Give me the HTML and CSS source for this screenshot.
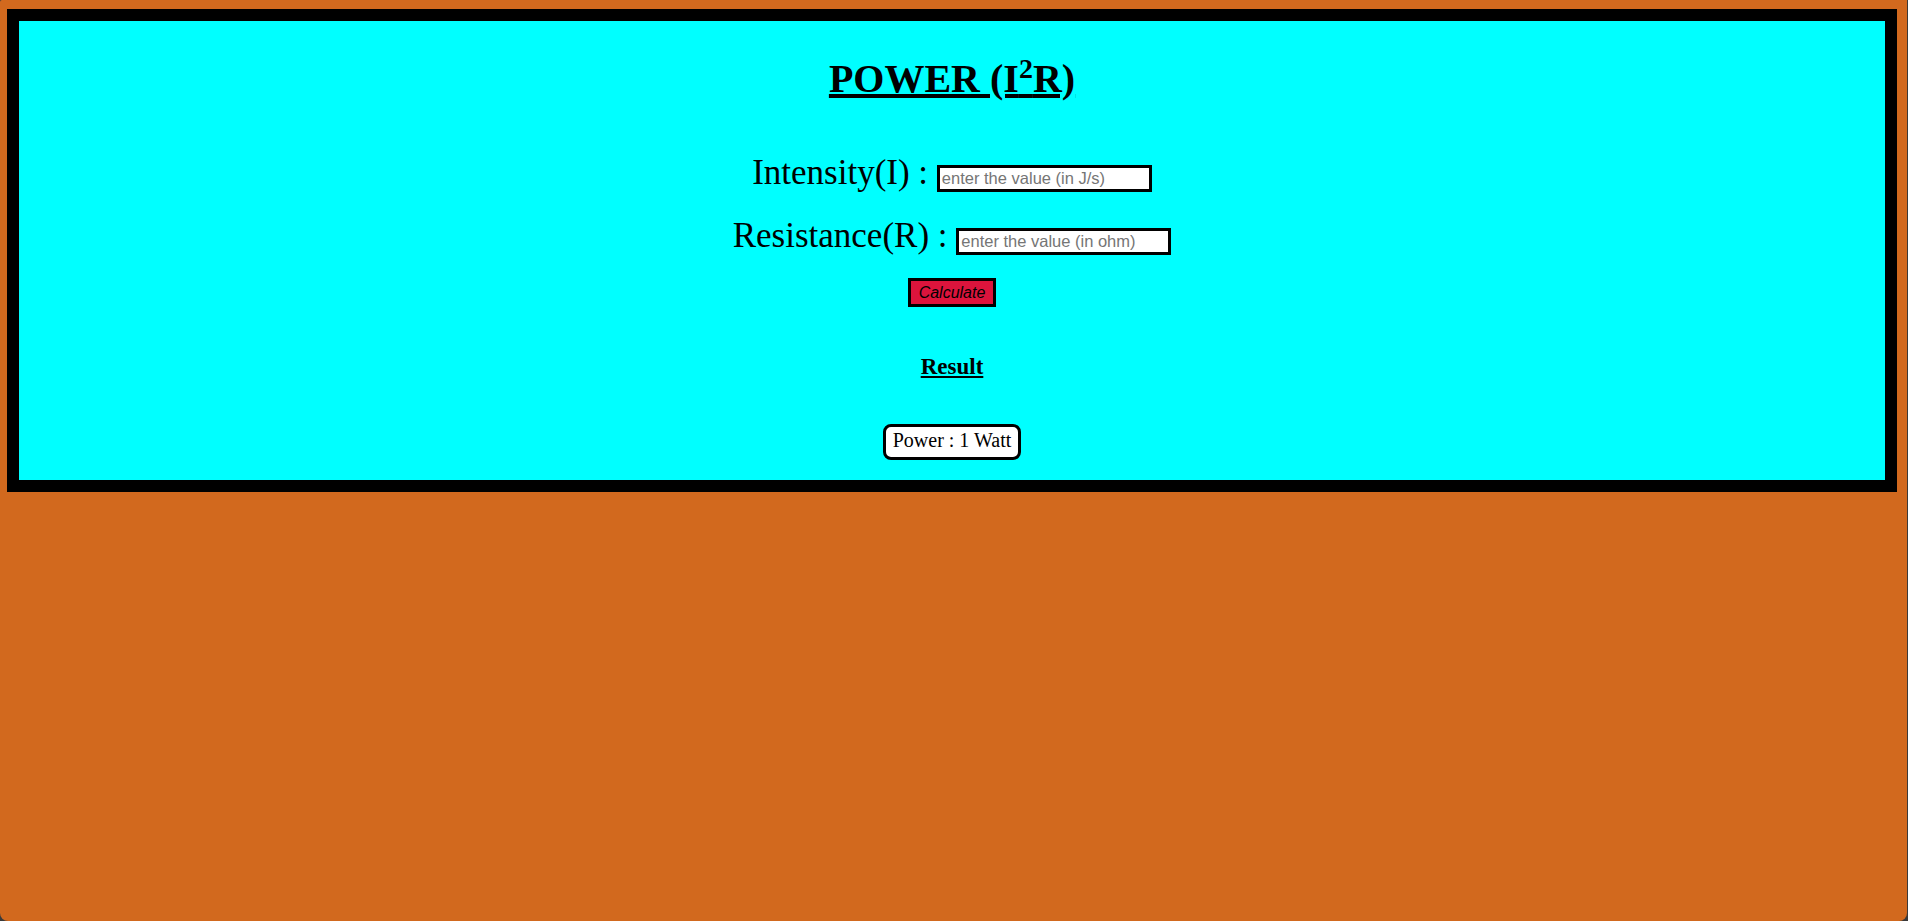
FILE: index.html
```html
<!DOCTYPE html>
<html lang="en">
<head>
<meta charset="utf-8">
<title>Power (I²R)</title>
<link rel="stylesheet" href="styles.css">
</head>
<body>
<div class="panel">
  <h1 class="title"><u>POWER (I<sup class="sup">2</sup>R)</u></h1>
  <div class="field field-first"><label class="label" for="intensity">Intensity(I) :</label> <input class="input" id="intensity" type="text" placeholder="enter the value (in J/s)"></div>
  <div class="field"><label class="label" for="resistance">Resistance(R) :</label> <input class="input" id="resistance" type="text" placeholder="enter the value (in ohm)"></div>
  <button class="calc" type="button">Calculate</button>
  <h2 class="result-title"><u>Result</u></h2>
  <div class="result">Power : 1 Watt</div>
</div>
</body>
</html>
```
FILE: styles.css
```css
html {
  height: 100%;
  background: #3a3a3a;
}
body {
  margin: 0 1px 0 0;
  min-height: 100%;
  box-sizing: border-box;
  padding: 9px 10px 0 7px;
  background: #d2691e;
  border-radius: 2px 0 8px 8px;
  font-family: "Liberation Serif", "Times New Roman", serif;
  color: #000;
}
.panel {
  border: 12px solid #000;
  background: #00ffff;
  text-align: center;
  padding: 34.5px 0 20px;
}
.title {
  margin: 0;
  font-size: 40px;
  line-height: 46px;
  font-weight: bold;
}
.sup {
  font-size: 28px;
  line-height: 0;
  vertical-align: 14px;
}
.field {
  font-size: 35px;
  line-height: 40px;
  margin-top: 23px;
}
.field-first {
  margin-top: 51px;
}
.input {
  font-family: "Liberation Sans", Arial, sans-serif;
  font-size: 16.5px;
  width: 205px;
  padding: 1px 2px;
  border: 3px solid #000;
  background: #fff;
  color: #000;
  outline: none;
}
.input::placeholder {
  color: #757575;
}
.calc {
  display: block;
  margin: 22.5px auto 0;
  font-family: "Liberation Sans", Arial, sans-serif;
  font-style: italic;
  font-size: 16px;
  line-height: 18px;
  padding: 2.5px 8px;
  border: 3px solid #000;
  border-radius: 0;
  background: #dc143c;
  color: #000;
}
.result-title {
  margin: 47px 0 0;
  font-size: 23px;
  line-height: 26px;
  font-weight: bold;
}
.result {
  width: fit-content;
  margin: 44px auto 0;
  font-size: 20px;
  line-height: 22px;
  padding: 2px 7px 6px;
  border: 3px solid #000;
  border-radius: 8px;
  background: #fff;
}
```
